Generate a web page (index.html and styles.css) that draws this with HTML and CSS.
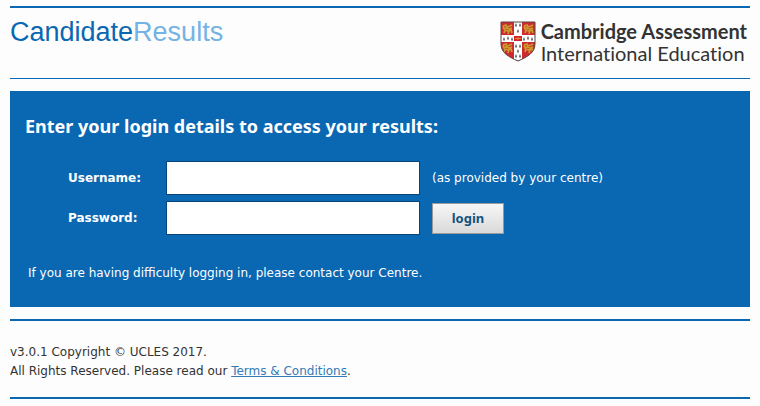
FILE: index.html
```html
<!DOCTYPE html>
<html lang="en">
<head>
    <meta charset="utf-8">
    <meta name="viewport" content="width=device-width, initial-scale=1">
    <title>Candidate Results</title>
    <link rel="stylesheet" href="styles.css">
</head>
<body>
    <header class="header">
        <h1 class="logo">Candidate<span>Results</span></h1>
        <div class="brand">
            <svg class="shield" viewBox="0 0 36 41" aria-hidden="true">
                <defs>
                    <clipPath id="shape">
                        <path d="M1 1H35V23C35 32 27 36 18 40C9 36 1 32 1 23Z"/>
                    </clipPath>
                    <g id="lion" fill="none" stroke="#c99a2c" stroke-width="1.7">
                        <path d="M1 2L4 1L5 3L8 2L10 1M1 5L4 4L7 5L10 4M2 9L3 6L6 7L9 6L10 9M6 10L7 7M2 2L1 4"/>
                    </g>
                    <path id="ermine" d="M0 0L1 2L1 4L0 3L-1 4L-1 2Z" fill="#777"/>
                </defs>
                <g clip-path="url(#shape)">
                    <rect width="36" height="41" fill="#cf2a2f"/>
                    <use href="#lion" x="2" y="3"/>
                    <use href="#lion" x="23" y="3"/>
                    <use href="#lion" x="2" y="22"/>
                    <use href="#lion" x="23" y="22"/>
                    <path d="M14 0H22V14H36V21H22V41H14V21H0V14H14Z" fill="#fff"/>
                    <use href="#ermine" x="16" y="2"/>
                    <use href="#ermine" x="20" y="2"/>
                    <use href="#ermine" x="18" y="8"/>
                    <use href="#ermine" x="4" y="16"/>
                    <use href="#ermine" x="8" y="15"/>
                    <use href="#ermine" x="12" y="16"/>
                    <use href="#ermine" x="24" y="16"/>
                    <use href="#ermine" x="28" y="15"/>
                    <use href="#ermine" x="32" y="16"/>
                    <use href="#ermine" x="16" y="23"/>
                    <use href="#ermine" x="20" y="23"/>
                    <use href="#ermine" x="18" y="28"/>
                    <use href="#ermine" x="16" y="33"/>
                    <use href="#ermine" x="20" y="33"/>
                    <rect x="14" y="15" width="8" height="5" fill="#d3242b"/>
                    <path d="M15 17.500H21M18 16V19" stroke="#e3902c"/>
                </g>
                <path d="M1 1H35V23C35 32 27 36 18 40C9 36 1 32 1 23Z" fill="none" stroke="#5a4545"/>
            </svg>
            <p class="brand-name"><strong>Cambridge Assessment</strong><br>International Education</p>
        </div>
    </header>

    <main class="panel">
        <h2>Enter your login details to access your results:</h2>
        <form class="login-form">
            <label for="username">Username:</label>
            <input type="text" id="username" aria-describedby="hint">
            <span class="hint" id="hint">(as provided by your centre)</span>

            <label for="password">Password:</label>
            <input type="password" id="password">
            <button type="submit">login</button>
        </form>
        <p class="help">If you are having difficulty logging in, please contact your Centre.</p>
    </main>

    <footer class="footer">
        <p>v3.0.1 Copyright © UCLES 2017.</p>
        <p>All Rights Reserved. Please read our <a href="#">Terms &amp; Conditions</a>.</p>
    </footer>
</body>
</html>
```

FILE: styles.css
```css
body{
    margin: 6px 10px;
    background-color: #fdfdfd;
    color: #333;
    font-family: Verdana, "DejaVu Sans", sans-serif;
    font-size: 12px;
}
h1,h2,p{
    margin: 0;
}
.header{
    display: flex;
    justify-content: space-between;
    align-items: flex-start;
    border-top: 2px solid #0a67b2;
    border-bottom: 1px solid #0a67b2;
    padding: 8px 3px 14px 0;
}
.logo{
    font-family: Arial, "Liberation Sans", sans-serif;
    font-size: 27px;
    line-height: 32px;
    font-weight: normal;
    color: #0a67b2;
}
.logo span{
    color: #74b3e3;
}
.brand{
    display: flex;
    gap: 5px;
    padding-top: 4px;
}
.shield{
    width: 36px;
    height: 41px;
    margin-top: 1px;
}
.brand-name{
    font-family: Lato, sans-serif;
    font-size: 20px;
    line-height: 22px;
    font-variant-ligatures: none;
    color: #333;
}
.brand-name strong{
    font-weight: 700;
}
.panel{
    margin: 12px 0;
    padding: 24px 15px;
    background-color: #0a67b2;
    color: #fff;
}
.panel h2{
    font-family: Tahoma, "Noto Sans", sans-serif;
    font-size: 18px;
    line-height: 22px;
}
.login-form{
    display: grid;
    grid-template-columns: 86px 254px 1fr;
    column-gap: 12px;
    row-gap: 6px;
    align-items: center;
    justify-items: start;
    margin: 24px 0 28px 43px;
}
.login-form label{
    font-weight: bold;
}
.login-form input{
    box-sizing: border-box;
    width: 100%;
    height: 34px;
    padding: 4px 8px;
    border: 1px solid #07457a;
    background-color: #fff;
    font-size: 14px;
}
button{
    width: 72px;
    height: 31px;
    border: 1px solid #999;
    background: linear-gradient(#f6f6f6, #dadada);
    color: #12527f;
    font-family: Tahoma, "Noto Sans", sans-serif;
    font-size: 13px;
    font-weight: bold;
    cursor: pointer;
}
button:hover{
    background: #fff;
}
.help{
    padding: 0 3px;
    line-height: 20px;
}
.footer{
    border-top: 2px solid #0a67b2;
    border-bottom: 2px solid #0a67b2;
    padding: 22px 0 16px;
    line-height: 19px;
}
.footer a{
    color: #337ab7;
}
```
